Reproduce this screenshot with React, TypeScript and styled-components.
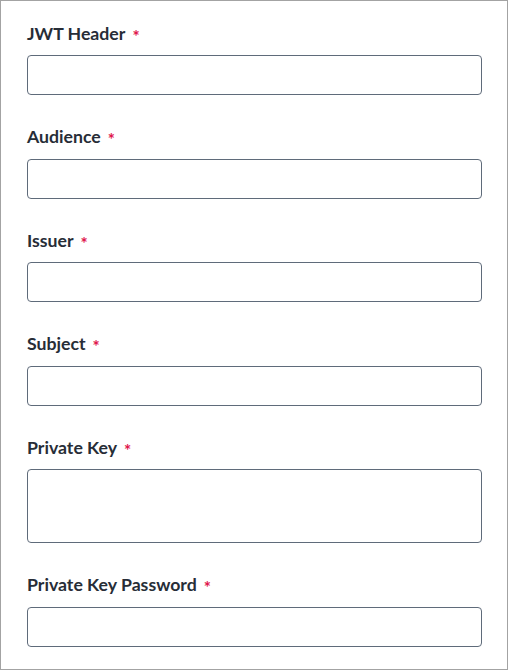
import React from "react";
import styled, { createGlobalStyle } from "styled-components";

const Global = createGlobalStyle`
  html, body { margin: 0; padding: 0; background: #ffffff; }
  * { box-sizing: border-box; }
`;

const Frame = styled.div`
  width: 508px;
  height: 670px;
  border: 1px solid #a3a3a3;
  background: #ffffff;
  padding: 20px 25px 0 26px;
  display: flex;
  flex-direction: column;
  font-family: "Lato", "Open Sans", sans-serif;
`;

const Field = styled.div`
  display: flex;
  flex-direction: column;
  gap: 10px;
  margin-bottom: 29.5px;
`;

const Label = styled.label`
  display: flex;
  align-items: center;
  height: 24px;
  font-size: 17.7px;
  font-weight: 700;
  color: #272d37;
  letter-spacing: 0;
`;

const Required = styled.span`
  color: #e0144c;
  font-size: 17px;
  font-weight: 700;
  margin-left: 7px;
  position: relative;
  top: 3px;
`;

const Input = styled.input`
  height: 40px;
  width: 100%;
  border: 1px solid #5f6b7a;
  border-radius: 4px;
  background: #fff;
  padding: 0 10px;
  font: inherit;
  font-weight: 400;
  outline: none;
`;

const TextArea = styled.textarea`
  height: 74px;
  width: 100%;
  border: 1px solid #5f6b7a;
  border-radius: 4px;
  background: #fff;
  padding: 8px 10px;
  font: inherit;
  font-weight: 400;
  resize: none;
  outline: none;
`;

const fields: { label: string; multi?: boolean }[] = [
  { label: "JWT Header" },
  { label: "Audience" },
  { label: "Issuer" },
  { label: "Subject" },
  { label: "Private Key", multi: true },
  { label: "Private Key Password" },
];

export default function App() {
  return (
    <>
      <Global />
      <Frame>
        {fields.map((f) => (
          <Field key={f.label}>
            <Label>
              {f.label}
              <Required>*</Required>
            </Label>
            {f.multi ? <TextArea /> : <Input />}
          </Field>
        ))}
      </Frame>
    </>
  );
}
